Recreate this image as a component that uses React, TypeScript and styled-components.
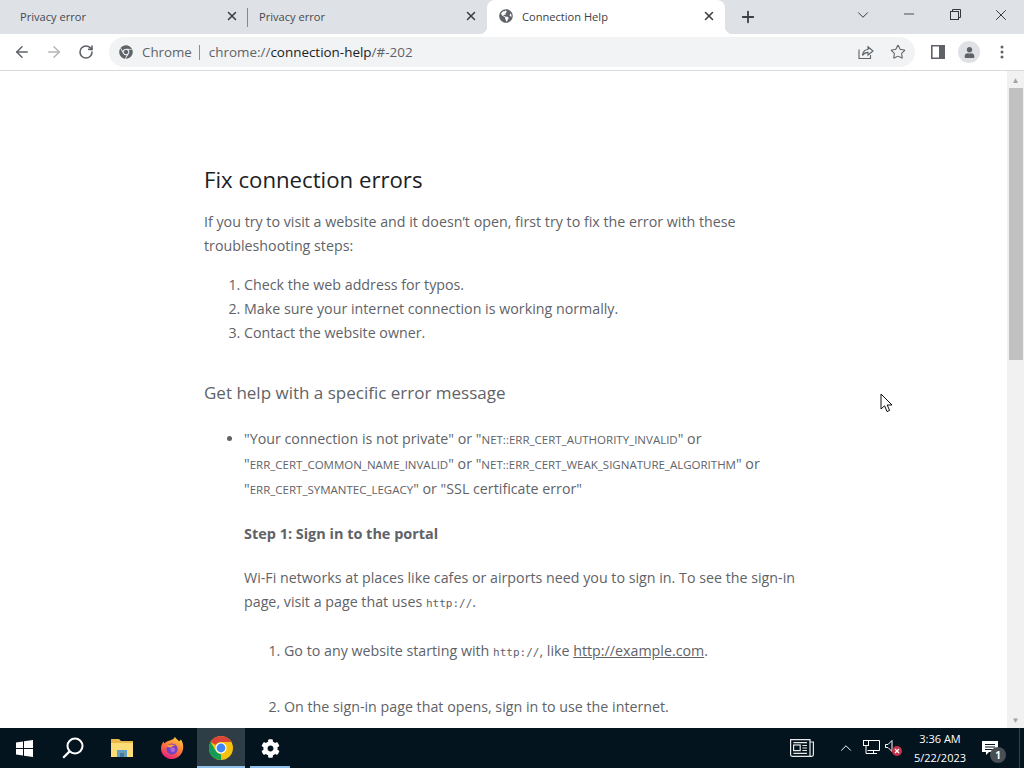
import React from 'react';
import styled, { createGlobalStyle } from 'styled-components';
import { ArrowLeft, ArrowRight, RotateCw, Star, X, Plus, ChevronDown, ChevronUp, Minus } from 'lucide-react';
import { FaChrome, FaGlobeAmericas, FaCog, FaUser } from 'react-icons/fa';

const GlobalStyle = createGlobalStyle`
  html, body {
    margin: 0;
    padding: 0;
    overflow: hidden;
    background: #fff;
  }
`;

const Screen = styled.div`
  position: relative;
  display: flex;
  flex-direction: column;
  width: 1024px;
  height: 768px;
  overflow: hidden;
  font-family: 'Open Sans', 'Liberation Sans', sans-serif;
`;

const TabStrip = styled.div`
  display: flex;
  align-items: stretch;
  height: 34px;
  background: #dee1e6;
  flex-shrink: 0;
`;

const Tab = styled.div<{ $active?: boolean; $width: number; $divider?: boolean; $inset?: number }>`
  position: relative;
  display: flex;
  align-items: center;
  width: ${(p) => p.$width}px;
  padding: 0 9px 2px ${(p) => p.$inset ?? 12}px;
  box-sizing: border-box;
  flex-shrink: 0;
  background: ${(p) => (p.$active ? '#fff' : 'transparent')};
  border-radius: ${(p) => (p.$active ? '8px 8px 0 0' : '0')};
  color: ${(p) => (p.$active ? '#3c4043' : '#45494d')};
  ${(p) =>
    p.$divider &&
    `&::after {
      content: '';
      position: absolute;
      right: 0;
      top: 8px;
      bottom: 7px;
      width: 1px;
      background: #85888c;
    }`}
  ${(p) =>
    p.$active &&
    `&::before, &::after {
      content: '';
      position: absolute;
      bottom: 0;
      width: 8px;
      height: 8px;
    }
    &::before {
      left: -8px;
      background: radial-gradient(circle at 0 0, #dee1e6 8px, #fff 8.5px);
    }
    &::after {
      right: -8px;
      background: radial-gradient(circle at 100% 0, #dee1e6 8px, #fff 8.5px);
    }`}
`;

const TabLabel = styled.span`
  flex: 1;
  font-size: 11.1px;
  white-space: nowrap;
`;

const TabClose = styled(X)`
  width: 14px;
  height: 14px;
  color: #3c4043;
  stroke-width: 2.6;
`;

const Favicon = styled.span`
  display: flex;
  margin-right: 9px;
  color: #5f6368;
  font-size: 14px;
`;

const NewTab = styled.div`
  display: flex;
  align-items: center;
  justify-content: center;
  width: 22px;
  margin-left: 12px;
  padding-bottom: 1px;
  color: #3c4043;
`;

const WindowControls = styled.div`
  display: flex;
  margin-left: auto;
  color: #33363a;
`;

const WindowButton = styled.div<{ $width: number; $top?: number }>`
  display: flex;
  align-items: flex-start;
  justify-content: center;
  width: ${(p) => p.$width}px;
  padding-top: ${(p) => p.$top ?? 6}px;
`;

const Toolbar = styled.div`
  display: flex;
  align-items: center;
  height: 37px;
  padding: 0 0 0 10px;
  box-sizing: border-box;
  border-bottom: 1px solid #d9dadc;
  background: #fff;
  flex-shrink: 0;
`;

const NavButton = styled.div<{ $muted?: boolean }>`
  display: flex;
  align-items: center;
  justify-content: center;
  width: 24px;
  margin-right: 8px;
  color: ${(p) => (p.$muted ? '#b3b5b8' : '#5f6368')};
`;

const Omnibox = styled.div`
  display: flex;
  align-items: center;
  width: 806px;
  height: 30px;
  margin-left: 3px;
  padding: 0 9px 0 10px;
  box-sizing: border-box;
  border-radius: 15px;
  background: #f1f3f4;
  flex-shrink: 0;
`;

const SiteChip = styled.span`
  display: flex;
  align-items: center;
  gap: 9px;
  color: #5f6368;
  font-size: 13.3px;
`;

const ChipDivider = styled.span`
  width: 1px;
  height: 15px;
  margin: 0 9px 0 7px;
  background: #8a8d91;
`;

const Url = styled.span`
  font-size: 13.45px;
  color: #5f6368;
  white-space: nowrap;
`;

const UrlHost = styled.span`
  color: #202124;
`;

const OmniActions = styled.div`
  display: flex;
  align-items: center;
  gap: 16px;
  margin-left: auto;
  color: #5f6368;
`;

const ToolbarActions = styled.div`
  display: flex;
  align-items: center;
  margin-left: 16px;
  color: #5f6368;
`;

const Avatar = styled.div`
  display: flex;
  align-items: center;
  justify-content: center;
  width: 22px;
  height: 22px;
  margin: 0 20px 0 13px;
  border-radius: 50%;
  background: #dfe1e5;
  color: #5f6368;
  font-size: 11px;
`;

const Viewport = styled.div`
  display: flex;
  flex: 1;
  min-height: 0;
`;

const Page = styled.main`
  flex: 1;
  overflow: hidden;
  padding: 93px 0 0 204px;
  color: #5f6368;
  font-size: 14.25px;
  line-height: 24px;
`;

const Column = styled.div`
  width: 596px;
`;

const Title = styled.h1`
  margin: 0 0 14px;
  color: #202124;
  font-size: 22.2px;
  font-weight: 400;
  line-height: 32px;
`;

const Paragraph = styled.p<{ $top?: number }>`
  margin: ${(p) => p.$top ?? 0}px 0 0;
`;

const Steps = styled.ol`
  margin: 15px 0 0;
  padding: 0 0 0 40px;
`;

const Subtitle = styled.h2`
  margin: 33px 0 0;
  font-size: 17px;
  font-weight: 400;
  line-height: 30px;
`;

const Errors = styled.ul`
  margin: 18px 0 0;
  padding: 0 0 0 40px;
`;

const ErrorLine = styled.div`
  line-height: 25px;
  white-space: nowrap;
`;

const ErrorCode = styled.span`
  font-size: 11.5px;
  line-height: 1;
`;

const StepTitle = styled.h3`
  margin: 21px 0 0;
  font-size: 14.45px;
  font-weight: 700;
  line-height: 24px;
`;

const Mono = styled.code`
  font-family: 'DejaVu Sans Mono', 'Liberation Mono', monospace;
  font-size: 11px;
  line-height: 1;
`;

const Substeps = styled.ol`
  margin: 25px 0 0;
  padding: 0 0 0 40px;
`;

const Substep = styled.li<{ $top?: number }>`
  margin-top: ${(p) => p.$top ?? 0}px;
`;

const PageLink = styled.a`
  color: #5f6368;
  text-decoration: underline;
`;

const Scrollbar = styled.div`
  display: flex;
  flex-direction: column;
  width: 17px;
  background: #f1f1f1;
  flex-shrink: 0;
`;

const ScrollArrow = styled.div`
  display: flex;
  align-items: center;
  justify-content: center;
  height: 17px;
  color: #a3a3a3;
  font-size: 8px;
`;

const ScrollThumb = styled.div`
  height: 272px;
  margin: 0 1px 0 2px;
  background: #c1c1c1;
`;

const ScrollSpace = styled.div`
  flex: 1;
`;

const Cursor = styled.svg`
  position: absolute;
  left: 880px;
  top: 393px;
`;

const Taskbar = styled.footer`
  display: flex;
  align-items: stretch;
  height: 40px;
  background: #04141f;
  flex-shrink: 0;
`;

const TaskItem = styled.div<{ $width: number; $open?: boolean; $focused?: boolean }>`
  position: relative;
  display: flex;
  align-items: center;
  justify-content: center;
  width: ${(p) => p.$width}px;
  background: ${(p) => (p.$focused ? '#2f3d47' : 'transparent')};
  color: #fff;
  ${(p) =>
    p.$open &&
    `&::after {
      content: '';
      position: absolute;
      bottom: 0;
      left: ${p.$focused ? 0 : 5}px;
      right: ${p.$focused ? 0 : 5}px;
      height: 2px;
      background: #8fc1ea;
    }`}
`;

const Tray = styled.div`
  display: flex;
  align-items: center;
  margin-left: auto;
  margin-right: 4px;
  color: #fff;
`;

const TrayIcon = styled.div<{ $width: number }>`
  position: relative;
  display: flex;
  align-items: center;
  justify-content: center;
  width: ${(p) => p.$width}px;
`;

const Clock = styled.div`
  width: 70px;
  color: #fff;
  font-size: 11px;
  line-height: 19px;
  text-align: center;
  white-space: nowrap;
`;

const NotifyBadge = styled.span`
  position: absolute;
  right: -1px;
  bottom: -7px;
  display: flex;
  align-items: center;
  justify-content: center;
  width: 16px;
  height: 16px;
  border-radius: 50%;
  background: #4a4f54;
  color: #fff;
  font-size: 10px;
  font-weight: 700;
`;

const TaskbarEdge = styled.div`
  width: 1px;
  height: 40px;
  margin-left: 14px;
  background: #33414c;
`;

function ShareIcon() {
  return (
    <svg width="16" height="16" viewBox="0 0 16 16" fill="none" stroke="currentColor" strokeWidth="1.1">
      <path d="M1 5.5V14.5H12.5V11" />
      <path d="M4.5 11.5C5 7.5 7.5 5.5 10 5.5V2.8L15 7L10 11V8.4C8 8.4 6 9.3 4.5 11.5Z" />
    </svg>
  );
}

function SidePanelIcon() {
  return (
    <svg width="14" height="14" viewBox="0 0 14 14">
      <path fillRule="evenodd" fill="currentColor" d="M0 0H14V14H0ZM1.6 1.6V12.4H8V1.6Z" />
    </svg>
  );
}

function MenuDots() {
  return (
    <svg width="4" height="14" viewBox="0 0 4 14" fill="currentColor">
      <circle cx="2" cy="2" r="1.5" />
      <circle cx="2" cy="7" r="1.5" />
      <circle cx="2" cy="12" r="1.5" />
    </svg>
  );
}

function RestoreIcon() {
  return (
    <svg width="11" height="11" viewBox="0 0 11 11" fill="none" stroke="currentColor" strokeWidth="1">
      <rect x="0.5" y="2.5" width="8" height="8" />
      <path d="M2.5 2.5V0.5H10.5V8.5H8.5" />
    </svg>
  );
}

function WindowsLogo() {
  return (
    <svg width="17" height="17" viewBox="0 0 17 17" fill="#fff">
      <path d="M0 2.4L7 1.4V8H0ZM8 1.2L17 0V8H8ZM0 9H7V15.6L0 14.6ZM8 9H17V17L8 15.8Z" />
    </svg>
  );
}

function SearchIcon() {
  return (
    <svg width="22" height="22" viewBox="0 0 22 22" fill="none" stroke="#fff">
      <circle cx="13" cy="9" r="7.5" strokeWidth="2" />
      <path d="M7.6 14.4L1.2 20.8" strokeWidth="2.2" />
    </svg>
  );
}

function FolderIcon() {
  return (
    <svg width="22" height="20" viewBox="0 0 22 20">
      <path fill="#e8b84a" d="M0 1H8L10 3H22V19H0Z" />
      <path fill="#fcdd78" d="M0 5H22V19H0Z" />
      <path fill="#5f9fc9" d="M6 12H16V19H13.5V14.5H8.5V19H6Z" />
      <path fill="#3f7da6" d="M8.5 14.5H13.5V19H8.5Z" />
    </svg>
  );
}

function FirefoxIcon() {
  return (
    <svg width="24" height="24" viewBox="0 0 24 24">
      <defs>
        <linearGradient id="fox" x1="0.7" y1="0" x2="0.2" y2="1">
          <stop offset="0" stopColor="#ffc93b" />
          <stop offset="0.5" stopColor="#ff7139" />
          <stop offset="1" stopColor="#e31587" />
        </linearGradient>
      </defs>
      <path fill="url(#fox)" d="M15 0.8C15.6 3 17.6 3.4 19 5.2C20 4.6 20.6 4.2 20.8 3.2C22.6 5.6 23.4 8.4 23.2 11.8C22.8 18.2 18 23 12 23C5.8 23 1 18.4 1 12.4C1 9.6 2 7.2 3.6 5.4C3.8 6.4 4.2 7 4.8 7.4C6.6 4.6 11 4.6 12.4 3.6C13.6 2.8 14.6 2 15 0.8Z" />
      <circle cx="12" cy="13" r="5.6" fill="#7542c4" />
      <path fill="#ff9a3c" d="M6.2 10.6C8 8.4 12 7.8 15.4 9.4C13.2 9.4 11.6 10.4 11.2 11.8C9 11.4 7.4 11 6.2 10.6Z" />
      <circle cx="12.8" cy="13.8" r="2.4" fill="#b565d8" />
    </svg>
  );
}

function ChromeLogo() {
  return (
    <svg width="24" height="24" viewBox="0 0 24 24">
      <circle cx="12" cy="12" r="12" fill="#f4c20d" />
      <path fill="#db4437" d="M12 0A12 12 0 0 1 22.4 6H12A6 6 0 0 0 6.8 9L1.6 6A12 12 0 0 1 12 0Z" />
      <path fill="#0f9d58" d="M1.6 6L6.8 15A6 6 0 0 0 12 18L6.8 23A12 12 0 0 1 1.6 6Z" />
      <path fill="#0f9d58" d="M12 24L6.8 23L12 18Z" />
      <circle cx="12" cy="12" r="5.6" fill="#fff" />
      <circle cx="12" cy="12" r="4.4" fill="#4285f4" />
    </svg>
  );
}

function NewsIcon() {
  return (
    <svg width="24" height="18" viewBox="0 0 24 18" fill="none" stroke="#e8e8e8" strokeWidth="1.2">
      <path d="M0.6 0.6H20V17.4H2.4C1.4 17.4 0.6 16.6 0.6 15.6Z" />
      <path d="M20 3H23.4V15.6C23.4 16.6 22.6 17.4 21.6 17.4H20" />
      <rect x="3.6" y="6" width="6.6" height="5.6" />
      <path d="M3.4 3.6H17M12.4 6.5H17M12.4 9H17M12.4 11.5H17M3.4 14.4H17" />
    </svg>
  );
}

function NetworkIcon() {
  return (
    <svg width="17" height="16" viewBox="0 0 17 16" fill="none" stroke="#fff" strokeWidth="1">
      <path d="M4.5 0.5H16.5V10.5H4.5" />
      <rect x="0.5" y="0.5" width="5" height="5" fill="#04141f" />
      <path d="M3 5.5V13.5H6M10.5 10.5V13.5M6 13.5H14" />
    </svg>
  );
}

function SpeakerIcon() {
  return (
    <svg width="18" height="18" viewBox="0 0 18 18">
      <path fill="none" stroke="#fff" strokeWidth="1" d="M0.5 5.5H3L7 1.5V12.5L3 8.5H0.5Z" />
      <circle cx="12" cy="12" r="5" fill="#c4314b" />
      <path stroke="#fff" strokeWidth="1.2" d="M10 10L14 14M14 10L10 14" />
    </svg>
  );
}

function NotificationIcon() {
  return (
    <svg width="16" height="15" viewBox="0 0 16 15" fill="#fff">
      <path d="M0 0H16V11H7L4 14V11H0Z" />
      <path stroke="#04141f" strokeWidth="1" d="M3 3.5H13M3 6H13M3 8.5H13" />
    </svg>
  );
}

export default function App() {
  return (
    <Screen>
      <GlobalStyle />
      <TabStrip>
        <Tab $width={248} $divider $inset={20}>
          <TabLabel>Privacy error</TabLabel>
          <TabClose />
        </Tab>
        <Tab $width={239} $inset={11}>
          <TabLabel>Privacy error</TabLabel>
          <TabClose />
        </Tab>
        <Tab $active $width={238}>
          <Favicon>
            <FaGlobeAmericas />
          </Favicon>
          <TabLabel>Connection Help</TabLabel>
          <TabClose />
        </Tab>
        <NewTab>
          <Plus size={18} strokeWidth={2.4} />
        </NewTab>
        <WindowControls>
          <WindowButton $width={46}>
            <ChevronDown size={18} strokeWidth={1.3} />
          </WindowButton>
          <WindowButton $width={46}>
            <Minus size={16} strokeWidth={1.3} />
          </WindowButton>
          <WindowButton $width={46} $top={9}>
            <RestoreIcon />
          </WindowButton>
          <WindowButton $width={46}>
            <X size={18} strokeWidth={1.3} />
          </WindowButton>
        </WindowControls>
      </TabStrip>

      <Toolbar>
        <NavButton>
          <ArrowLeft size={18} />
        </NavButton>
        <NavButton $muted>
          <ArrowRight size={18} />
        </NavButton>
        <NavButton>
          <RotateCw size={16} strokeWidth={2.4} />
        </NavButton>
        <Omnibox>
          <SiteChip>
            <FaChrome size={14} />
            Chrome
          </SiteChip>
          <ChipDivider />
          <Url>
            chrome://<UrlHost>connection-help</UrlHost>/#-202
          </Url>
          <OmniActions>
            <ShareIcon />
            <Star size={16} strokeWidth={1.6} />
          </OmniActions>
        </Omnibox>
        <ToolbarActions>
          <SidePanelIcon />
          <Avatar>
            <FaUser />
          </Avatar>
          <MenuDots />
        </ToolbarActions>
      </Toolbar>

      <Viewport>
        <Page>
          <Column>
            <Title>Fix connection errors</Title>
            <Paragraph>
              If you try to visit a website and it doesn’t open, first try to fix the error with these troubleshooting
              steps:
            </Paragraph>
            <Steps>
              <li>Check the web address for typos.</li>
              <li>Make sure your internet connection is working normally.</li>
              <li>Contact the website owner.</li>
            </Steps>
            <Subtitle>Get help with a specific error message</Subtitle>
            <Errors>
              <li>
                <ErrorLine>
                  "Your connection is not private" or "<ErrorCode>NET::ERR_CERT_AUTHORITY_INVALID</ErrorCode>" or
                </ErrorLine>
                <ErrorLine>
                  "<ErrorCode>ERR_CERT_COMMON_NAME_INVALID</ErrorCode>" or "
                  <ErrorCode>NET::ERR_CERT_WEAK_SIGNATURE_ALGORITHM</ErrorCode>" or
                </ErrorLine>
                <ErrorLine>
                  "<ErrorCode>ERR_CERT_SYMANTEC_LEGACY</ErrorCode>" or "SSL certificate error"
                </ErrorLine>
                <StepTitle>Step 1: Sign in to the portal</StepTitle>
                <Paragraph $top={20}>
                  Wi-Fi networks at places like cafes or airports need you to sign in. To see the sign-in page, visit a
                  page that uses <Mono>http://</Mono>.
                </Paragraph>
                <Substeps>
                  <li>
                    Go to any website starting with <Mono>http://</Mono>, like{' '}
                    <PageLink href="#">http://example.com</PageLink>.
                  </li>
                  <Substep $top={32}>On the sign-in page that opens, sign in to use the internet.</Substep>
                </Substeps>
              </li>
            </Errors>
          </Column>
        </Page>
        <Scrollbar>
          <ScrollArrow>▲</ScrollArrow>
          <ScrollThumb />
          <ScrollSpace />
          <ScrollArrow>▼</ScrollArrow>
        </Scrollbar>
      </Viewport>

      <Taskbar>
        <TaskItem $width={48}>
          <WindowsLogo />
        </TaskItem>
        <TaskItem $width={49}>
          <SearchIcon />
        </TaskItem>
        <TaskItem $width={50}>
          <FolderIcon />
        </TaskItem>
        <TaskItem $width={50}>
          <FirefoxIcon />
        </TaskItem>
        <TaskItem $width={48} $open $focused>
          <ChromeLogo />
        </TaskItem>
        <TaskItem $width={50} $open>
          <FaCog size={19} />
        </TaskItem>
        <Tray>
          <TrayIcon $width={62}>
            <NewsIcon />
          </TrayIcon>
          <TrayIcon $width={26}>
            <ChevronUp size={18} strokeWidth={1.3} />
          </TrayIcon>
          <TrayIcon $width={24}>
            <NetworkIcon />
          </TrayIcon>
          <TrayIcon $width={22}>
            <SpeakerIcon />
          </TrayIcon>
          <Clock>
            3:36 AM
            <br />
            5/22/2023
          </Clock>
          <TrayIcon $width={30}>
            <NotificationIcon />
            <NotifyBadge>1</NotifyBadge>
          </TrayIcon>
          <TaskbarEdge />
        </Tray>
      </Taskbar>

      <Cursor width="13" height="20" viewBox="0 0 13 20">
        <path fill="#fff" stroke="#111" strokeWidth="1" d="M1 1V16L4.6 12.8L7 18.6L9.6 17.4L7.2 12H12Z" />
      </Cursor>
    </Screen>
  );
}
